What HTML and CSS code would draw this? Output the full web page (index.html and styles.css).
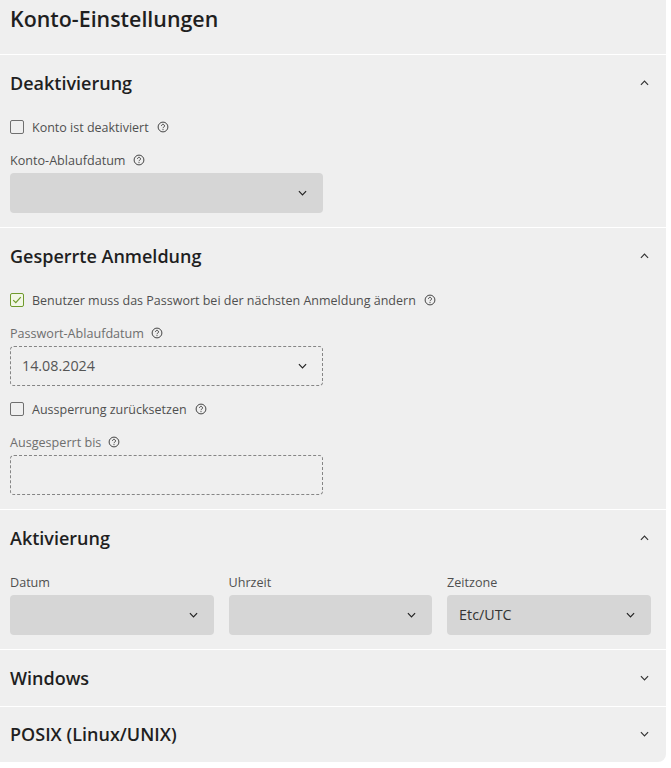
FILE: index.html
```html
<!DOCTYPE html>
<html lang="de">
<head>
<meta charset="utf-8">
<title>Konto-Einstellungen</title>
<link rel="stylesheet" href="styles.css">
</head>
<body>
<svg class="defs" width="0" height="0" aria-hidden="true">
  <symbol id="help" viewBox="0 0 12 12">
    <circle cx="6" cy="6" r="4.9" fill="none" stroke="currentColor" stroke-width="1"/>
    <path d="M4.5 4.8a1.5 1.5 0 1 1 2.3 1.3c-.5.3-.8.6-.8 1.1" fill="none" stroke="currentColor" stroke-width="1"/>
    <circle cx="6" cy="8.6" r=".6" fill="currentColor"/>
  </symbol>
  <symbol id="down" viewBox="0 0 10 6">
    <path d="M1 1l4 4 4-4" fill="none" stroke="currentColor" stroke-width="1.3"/>
  </symbol>
  <symbol id="up" viewBox="0 0 10 6">
    <path d="M1 5l4-4 4 4" fill="none" stroke="currentColor" stroke-width="1.3"/>
  </symbol>
</svg>
<main class="card">
  <h1 class="title">Konto-Einstellungen</h1>

  <section class="section">
    <header class="section-head"><h2>Deaktivierung</h2><svg class="toggle"><use href="#up"/></svg></header>
    <div class="section-body">
      <div class="check-row"><span class="box"></span><span>Konto ist deaktiviert</span><svg class="help"><use href="#help"/></svg></div>
      <div class="field">
        <div class="label"><span>Konto-Ablaufdatum</span><svg class="help"><use href="#help"/></svg></div>
        <div class="select narrow"><span></span><svg class="chev"><use href="#down"/></svg></div>
      </div>
    </div>
  </section>

  <section class="section">
    <header class="section-head"><h2>Gesperrte Anmeldung</h2><svg class="toggle"><use href="#up"/></svg></header>
    <div class="section-body">
      <div class="check-row"><span class="box checked"><svg viewBox="0 0 14 14"><path d="M2.6 7.2l3 3 5.8-6.6" fill="none" stroke="currentColor" stroke-width="1.4"/></svg></span><span>Benutzer muss das Passwort bei der nächsten Anmeldung ändern</span><svg class="help"><use href="#help"/></svg></div>
      <div class="field">
        <div class="label muted"><span>Passwort-Ablaufdatum</span><svg class="help"><use href="#help"/></svg></div>
        <div class="select narrow dashed"><span>14.08.2024</span><svg class="chev"><use href="#down"/></svg></div>
      </div>
      <div class="check-row after-field"><span class="box"></span><span>Aussperrung zurücksetzen</span><svg class="help"><use href="#help"/></svg></div>
      <div class="field">
        <div class="label muted"><span>Ausgesperrt bis</span><svg class="help"><use href="#help"/></svg></div>
        <div class="select narrow dashed"></div>
      </div>
    </div>
  </section>

  <section class="section">
    <header class="section-head"><h2>Aktivierung</h2><svg class="toggle"><use href="#up"/></svg></header>
    <div class="section-body triple">
      <div class="field">
        <div class="label"><span>Datum</span></div>
        <div class="select"><span></span><svg class="chev"><use href="#down"/></svg></div>
      </div>
      <div class="field">
        <div class="label"><span>Uhrzeit</span></div>
        <div class="select"><span></span><svg class="chev"><use href="#down"/></svg></div>
      </div>
      <div class="field">
        <div class="label"><span>Zeitzone</span></div>
        <div class="select"><span>Etc/UTC</span><svg class="chev"><use href="#down"/></svg></div>
      </div>
    </div>
  </section>

  <section class="section">
    <header class="section-head collapsed"><h2>Windows</h2><svg class="toggle"><use href="#down"/></svg></header>
  </section>
  <section class="section">
    <header class="section-head collapsed last"><h2>POSIX (Linux/UNIX)</h2><svg class="toggle"><use href="#down"/></svg></header>
  </section>
</main>
</body>
</html>
```

FILE: styles.css
```css
* { box-sizing: border-box; }

html, body { margin: 0; background: #fff; }

body {
  font-family: "Open Sans", "Liberation Sans", sans-serif;
  color: #4a4a4a;
  font-size: 12.6px;
}

.defs { position: absolute; }

.card {
  width: 666px;
  height: 762px;
  background: #efefef;
  border-bottom-right-radius: 8px;
  overflow: hidden;
}

.title {
  margin: 0;
  height: 54px;
  padding: 4px 10px 0;
  font-size: 21.4px;
  line-height: 30px;
  font-weight: 600;
  color: #1f1f1f;
}

.section { border-top: 1px solid #fff; }

.section-head {
  height: 55px;
  padding: 0 17px 0 10px;
  display: flex;
  align-items: center;
  justify-content: space-between;
}

.section-head.collapsed { height: 56px; }
.section-head.last { height: 54px; }

.section-head h2 {
  margin: 0;
  font-size: 18px;
  line-height: 24px;
  font-weight: 600;
  color: #1f1f1f;
}

.toggle {
  width: 9px;
  height: 6px;
  color: #333;
}

.section-body { padding: 7px 15px 14px 10px; }

.triple {
  display: grid;
  grid-template-columns: repeat(3, 1fr);
  column-gap: 14.67px;
  padding-top: 8px;
}

.check-row {
  height: 20px;
  display: flex;
  align-items: center;
  gap: 8px;
  font-size: 12.5px;
  color: #4f4f4f;
}

.check-row.after-field { margin-top: 13px; }

.box {
  width: 14px;
  height: 14px;
  border: 1px solid #6f6f6f;
  border-radius: 2px;
  flex: none;
}

.box svg { display: block; width: 12px; height: 12px; }

.box.checked { border-color: #6f9a2c; color: #6f9a2c; background: #f2f7e6; }

.help {
  width: 12px;
  height: 12px;
  flex: none;
  color: #444;
}

.check-row + .field { margin-top: 14px; }

.label {
  height: 18px;
  margin-bottom: 4px;
  display: flex;
  align-items: center;
  gap: 7px;
  line-height: 18px;
  color: #4f4f4f;
}

.label span { padding-top: 2px; }

.label.muted { color: #6e6e6e; }

.select {
  height: 40px;
  padding: 0 16px 0 12px;
  background: #d6d6d6;
  border-radius: 4px;
  display: flex;
  align-items: center;
  justify-content: space-between;
  font-size: 14.3px;
  color: #333;
}

.select span { padding-bottom: 2px; }

.select.narrow { width: 313px; }

.select.dashed {
  background: transparent;
  border: 1px dashed #858585;
  padding: 0 15px 0 11px;
  color: #555;
}

.chev { width: 9px; height: 6px; color: #222; flex: none; }
```
